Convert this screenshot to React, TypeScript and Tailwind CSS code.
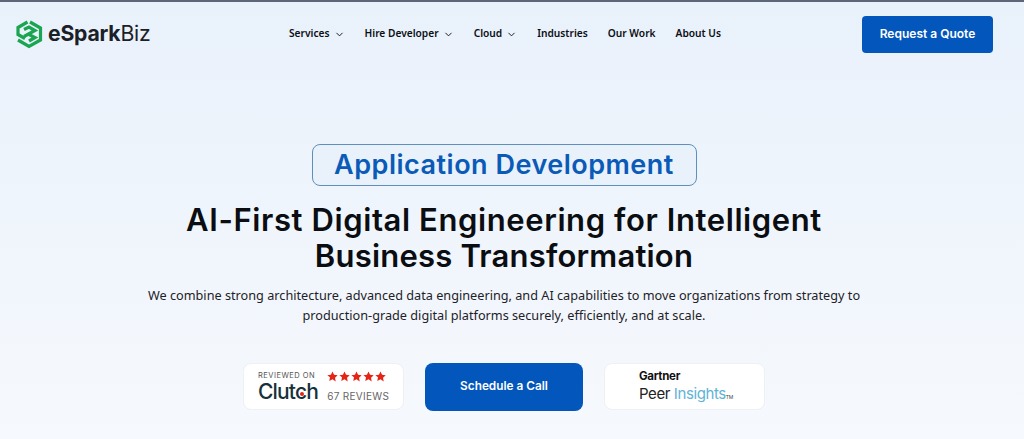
import { ChevronDown } from 'lucide-react';

const navItems = [
  { label: 'Services', menu: true },
  { label: 'Hire Developer', menu: true },
  { label: 'Cloud', menu: true },
  { label: 'Industries', menu: false },
  { label: 'Our Work', menu: false },
  { label: 'About Us', menu: false },
];

function Logo() {
  return (
    <svg width="28" height="30" viewBox="0 0 28 30" fill="none" stroke="#1aa551" strokeWidth="3.2">
      <path d="M12.5 3 L3 8.5 V15.5 L10 19.5" />
      <path d="M15 3 L25.5 9 V21 L14 27.5 L3 21" />
      <path d="M9 10.5 L14 8 L20 11.5 L9 17.5" />
      <path d="M13 15 L20 18.5 L14 22" />
    </svg>
  );
}

function Stars() {
  return (
    <div className="flex gap-[1px]">
      {[0, 1, 2, 3, 4].map((i) => (
        <svg key={i} width="11" height="11" viewBox="0 0 24 24" fill="#e62415">
          <path d="M12 1l3.4 7.3 7.9 1-5.8 5.5 1.5 7.9L12 18l-7 3.7 1.5-7.9L.7 9.3l7.9-1z" />
        </svg>
      ))}
    </div>
  );
}

export default function App() {
  return (
    <div className="h-[439px] w-[1024px] overflow-hidden border-t-2 border-[#5d6778] bg-gradient-to-b from-[#e9f1fb] to-[#f6f9fd] font-['Noto_Sans',sans-serif] text-[#0b0f14]">
      <header className="flex h-[64px] items-center pl-[15px] pr-[31px]">
        <div className="flex w-[230px] items-center gap-[5px]">
          <Logo />
          <span className="font-['Inter',sans-serif] text-[21.2px] leading-none tracking-[-0.2px] text-[#1a2026]">
            <span className="font-bold">eSpark</span>
            <span className="font-normal">Biz</span>
          </span>
        </div>
        <nav className="ml-[44px] flex items-center gap-[20px] text-[10.2px] font-semibold">
          {navItems.map((item) => (
            <span key={item.label} className="flex items-center gap-[4px]">
              {item.label}
              {item.menu && <ChevronDown size={11} strokeWidth={2} className="mt-[2px]" />}
            </span>
          ))}
        </nav>
        <button className="ml-auto flex h-[37px] w-[131px] items-center justify-center rounded-[4px] bg-[#0356bb] font-['Inter',sans-serif] text-[12px] font-semibold text-white">
          Request a Quote
        </button>
      </header>

      <main className="flex flex-col items-center pr-[16px] pt-[78px]">
        <div className="flex h-[42px] w-[385px] items-center justify-center rounded-[8px] border border-[#5f8fbd] bg-[#e9f1fa] font-['Inter',sans-serif] text-[27px] font-semibold tracking-[0.5px] text-[#0a5ab8]">
          Application Development
        </div>
        <h1 className="mt-[16px] text-center font-['Inter',sans-serif] text-[31px] font-semibold leading-[36px] tracking-[0.6px] text-[#0a0d12]">
          AI-First Digital Engineering for Intelligent
          <br />
          <span className="tracking-[0.2px]">Business Transformation</span>
        </h1>
        <p className="mt-[11px] text-center text-[12.7px] leading-[20px] text-[#1d2228]">
          We combine strong architecture, advanced data engineering, and AI capabilities to move organizations from strategy to
          <br />
          production-grade digital platforms securely, efficiently, and at scale.
        </p>
        <div className="mt-[38px] flex items-start gap-[21px]">
          <div className="flex h-[47px] w-[161px] items-center justify-center gap-[9px] rounded-[8px] border border-[#edf0f4] bg-white">
            <div className="flex flex-col items-start">
              <span className="font-['Inter',sans-serif] text-[7.5px] leading-[10px] tracking-[0.5px] text-[#555]">REVIEWED ON</span>
              <span className="relative font-['Inter',sans-serif] text-[21px] font-medium leading-[22px] tracking-[-0.8px] text-[#17313b]">
                Clutch
                <span className="absolute right-[14px] top-[11px] h-[4px] w-[4px] rounded-full bg-[#e62415]" />
              </span>
            </div>
            <div className="flex flex-col items-start gap-[8px]">
              <Stars />
              <span className="font-['Inter',sans-serif] text-[10px] leading-[12px] tracking-[0.3px] text-[#666]">67 REVIEWS</span>
            </div>
          </div>
          <button className="flex h-[48px] w-[158px] items-center justify-center rounded-[8px] bg-[#0356bb] font-['Inter',sans-serif] text-[11.8px] font-semibold text-white">
            Schedule a Call
          </button>
          <div className="flex h-[47px] w-[161px] flex-col justify-center rounded-[8px] border border-[#edf0f4] bg-white pl-[34px] pt-[3px]">
            <span className="font-['Inter',sans-serif] text-[11.5px] font-bold leading-[13px] tracking-[-0.3px] text-[#111]">Gartner</span>
            <span className="mt-[2px] font-['Inter',sans-serif] text-[15px] leading-[18px] tracking-[-0.4px] text-[#222]">
              Peer <span className="text-[#5fb3d6]">Insights</span>
              <span className="text-[5px] text-[#444]">TM</span>
            </span>
          </div>
        </div>
      </main>
    </div>
  );
}
